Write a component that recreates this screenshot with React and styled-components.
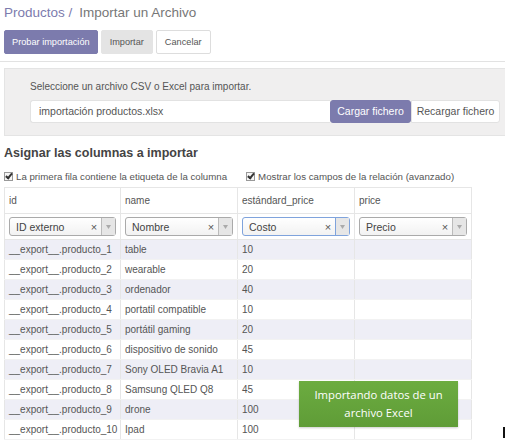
import React from 'react'
import styled, { createGlobalStyle } from 'styled-components'

const GlobalStyle = createGlobalStyle`
  body {
    margin: 0;
    background: #fff;
    font-family: "Liberation Sans", Arial, sans-serif;
    font-size: 10px;
    color: #555;
  }
`

const rows = [
  ['__export__.producto_1', 'table', '10'],
  ['__export__.producto_2', 'wearable', '20'],
  ['__export__.producto_3', 'ordenador', '40'],
  ['__export__.producto_4', 'portatil compatible', '10'],
  ['__export__.producto_5', 'portátil gaming', '20'],
  ['__export__.producto_6', 'dispositivo de sonido', '45'],
  ['__export__.producto_7', 'Sony OLED Bravia A1', '10'],
  ['__export__.producto_8', 'Samsung QLED Q8', '45'],
  ['__export__.producto_9', 'drone', '100'],
  ['__export__.producto_10', 'Ipad', '100'],
]

const columns = [
  { head: 'id', field: 'ID externo' },
  { head: 'name', field: 'Nombre' },
  { head: 'estándard_price', field: 'Costo', focus: true },
  { head: 'price', field: 'Precio' },
]

const App = () => {
  return (
    <Page>
      <GlobalStyle />
      <ControlPanel>
        <Breadcrumb>
          <Crumb>Productos /</Crumb>
          <Current>Importar un Archivo</Current>
        </Breadcrumb>
        <ButtonRow>
          <Button variant="primary">Probar importación</Button>
          <Button variant="muted">Importar</Button>
          <Button variant="default">Cancelar</Button>
        </ButtonRow>
      </ControlPanel>

      <FileBox>
        <Hint>Seleccione un archivo CSV o Excel para importar.</Hint>
        <FileRow>
          <FileInput>importación productos.xlsx</FileInput>
          <FileButton variant="primary">Cargar fichero</FileButton>
          <FileButton variant="default">Recargar fichero</FileButton>
        </FileRow>
      </FileBox>

      <Heading>Asignar las columnas a importar</Heading>
      <Options>
        <Option>
          <Check />
          La primera fila contiene la etiqueta de la columna
        </Option>
        <Option>
          <Check />
          Mostrar los campos de la relación (avanzado)
        </Option>
      </Options>

      <TableWrap>
        <Table>
          <colgroup>
            <col width="116" />
            <col width="117" />
            <col width="117" />
            <col width="117" />
          </colgroup>
          <thead>
            <tr>
              {columns.map((c) => (
                <Head key={c.head}>{c.head}</Head>
              ))}
            </tr>
            <tr>
              {columns.map((c) => (
                <SelectCell key={c.field}>
                  <Select focus={c.focus}>
                    <SelectText>{c.field}</SelectText>
                    <Clear>×</Clear>
                    <Arrow focus={c.focus}>
                      <svg width="5" height="4" viewBox="0 0 5 4">
                        <path d="M0 0h5L2.5 4z" fill="#aaa" />
                      </svg>
                    </Arrow>
                  </Select>
                </SelectCell>
              ))}
            </tr>
          </thead>
          <tbody>
            {rows.map((r, i) => (
              <Row key={r[0]} striped={i % 2 === 0}>
                <Cell>{r[0]}</Cell>
                <Cell>{r[1]}</Cell>
                <Cell>{r[2]}</Cell>
                <Cell />
              </Row>
            ))}
          </tbody>
        </Table>
        <Toast>Importando datos de un archivo Excel</Toast>
      </TableWrap>
      <Cursor />
    </Page>
  )
}

export default App

const Page = styled.div`
  position: relative;
  width: 505px;
  height: 445px;
  overflow: hidden;
`

const ControlPanel = styled.div`
  padding: 4px 4px 7px 4px;
  border-bottom: 1px solid #e2e2e2;
`

const Breadcrumb = styled.div`
  display: flex;
  gap: 7px;
  font-size: 13.5px;
  line-height: 18px;
  height: 20px;
`

const Crumb = styled.span`
  color: #7c7bad;
`

const Current = styled.span`
  color: #777;
`

const ButtonRow = styled.div`
  display: flex;
  gap: 3px;
  margin-top: 6px;
`

const Button = styled.div`
  height: 22px;
  line-height: 22px;
  padding: 0 ${(p) => (p.variant === 'primary' ? '7px' : '8px')};
  font-size: 9.2px;
  border-radius: 2px;
  background: ${(p) =>
    p.variant === 'primary' ? '#7c7bad' : p.variant === 'muted' ? '#e4e4e4' : '#fff'};
  color: ${(p) => (p.variant === 'primary' ? '#fff' : '#555')};
  border: 1px solid
    ${(p) => (p.variant === 'primary' ? '#7c7bad' : p.variant === 'muted' ? '#e4e4e4' : '#ddd')};
`

const FileBox = styled.div`
  margin: 6px 0 0 4px;
  height: 68px;
  box-sizing: border-box;
  padding: 12px 0 0 25px;
  background: #f0efef;
  border: 1px solid #e4e4e4;
  border-right: none;
`

const Hint = styled.div`
  font-size: 10px;
  color: #555;
  height: 18px;
`

const FileRow = styled.div`
  display: flex;
  margin-top: 1px;
  height: 23px;
`

const FileInput = styled.div`
  width: 300px;
  box-sizing: border-box;
  height: 23px;
  line-height: 21px;
  padding-left: 8px;
  background: #fff;
  border: 1px solid #e2e2e2;
  border-right: none;
  border-radius: 3px 0 0 3px;
  color: #555;
  font-size: 10.5px;
`

const FileButton = styled.div`
  box-sizing: border-box;
  width: ${(p) => (p.variant === 'primary' ? '81px' : '89px')};
  text-align: center;
  height: 23px;
  line-height: 21px;
  font-size: 10.5px;
  white-space: nowrap;
  background: ${(p) => (p.variant === 'primary' ? '#7c7bad' : '#fff')};
  color: ${(p) => (p.variant === 'primary' ? '#fff' : '#555')};
  border: 1px solid ${(p) => (p.variant === 'primary' ? '#7c7bad' : '#e2e2e2')};
  border-radius: ${(p) => (p.variant === 'primary' ? '3px' : '0 3px 3px 0')};
`

const Heading = styled.div`
  margin: 10px 0 0 4px;
  font-size: 12.5px;
  font-weight: bold;
  color: #444;
  height: 18px;
`

const Options = styled.div`
  display: flex;
  gap: 19px;
  margin: 5px 0 0 4px;
  height: 14px;
`

const Option = styled.div`
  display: flex;
  align-items: center;
  gap: 3px;
  font-size: 9.7px;
  color: #555;
  white-space: nowrap;
`

const Check = styled.span`
  width: 7px;
  height: 7px;
  border: 1px solid #999;
  background: #f6f6f6;
  position: relative;
  &::after {
    content: '';
    position: absolute;
    left: 2px;
    top: -1px;
    width: 2px;
    height: 5px;
    border-right: 2px solid #333;
    border-bottom: 2px solid #333;
    transform: rotate(40deg);
  }
`

const TableWrap = styled.div`
  position: relative;
  margin: 4px 0 0 4px;
`

const Table = styled.table`
  border-collapse: collapse;
  table-layout: fixed;
  width: 467px;
`

const Head = styled.th`
  height: 25px;
  text-align: left;
  font-weight: normal;
  font-size: 10px;
  color: #555;
  padding: 0 0 0 4px;
  border: 1px solid #e6e6e6;
`

const SelectCell = styled.td`
  height: 25px;
  padding: 0 4px;
  border: 1px solid #e6e6e6;
`

const Select = styled.div`
  display: flex;
  align-items: center;
  height: 19px;
  box-sizing: border-box;
  border: 1px solid ${(p) => (p.focus ? '#7fa3dc' : '#aaa')};
  border-radius: 3px;
  background: linear-gradient(#fff, #f2f2f2);
`

const SelectText = styled.span`
  flex: 1;
  padding-left: 6px;
  color: #444;
  font-size: 10.5px;
`

const Clear = styled.span`
  width: 14px;
  font-size: 11px;
  color: #555;
  text-align: center;
`

const Arrow = styled.span`
  width: 13px;
  height: 100%;
  display: flex;
  align-items: center;
  justify-content: center;
  border-left: 1px solid ${(p) => (p.focus ? '#7fa3dc' : '#bbb')};
  background: #e6e6e6;
`

const Row = styled.tr`
  background: ${(p) => (p.striped ? '#eeeef6' : '#fff')};
`

const Cell = styled.td`
  height: 19px;
  padding: 0 0 0 4px;
  font-size: 10px;
  color: #555;
  white-space: nowrap;
  border-left: 1px solid #e6e6e6;
  border-right: 1px solid #e6e6e6;
  border-bottom: 1px solid #f2f2f2;
`

const Toast = styled.div`
  position: absolute;
  left: 295px;
  top: 194px;
  width: 159px;
  height: 46px;
  box-sizing: border-box;
  padding-top: 5px;
  background: linear-gradient(#6cac40, #5f9c37);
  color: #fff;
  font-family: "Open Sans", sans-serif;
  font-size: 11.3px;
  line-height: 18px;
  text-align: center;
  box-shadow: 0 1px 2px rgba(0, 0, 0, 0.2);
`

const Cursor = styled.div`
  position: absolute;
  left: 503px;
  top: 427px;
  width: 2px;
  height: 11px;
  background: #111;
`
